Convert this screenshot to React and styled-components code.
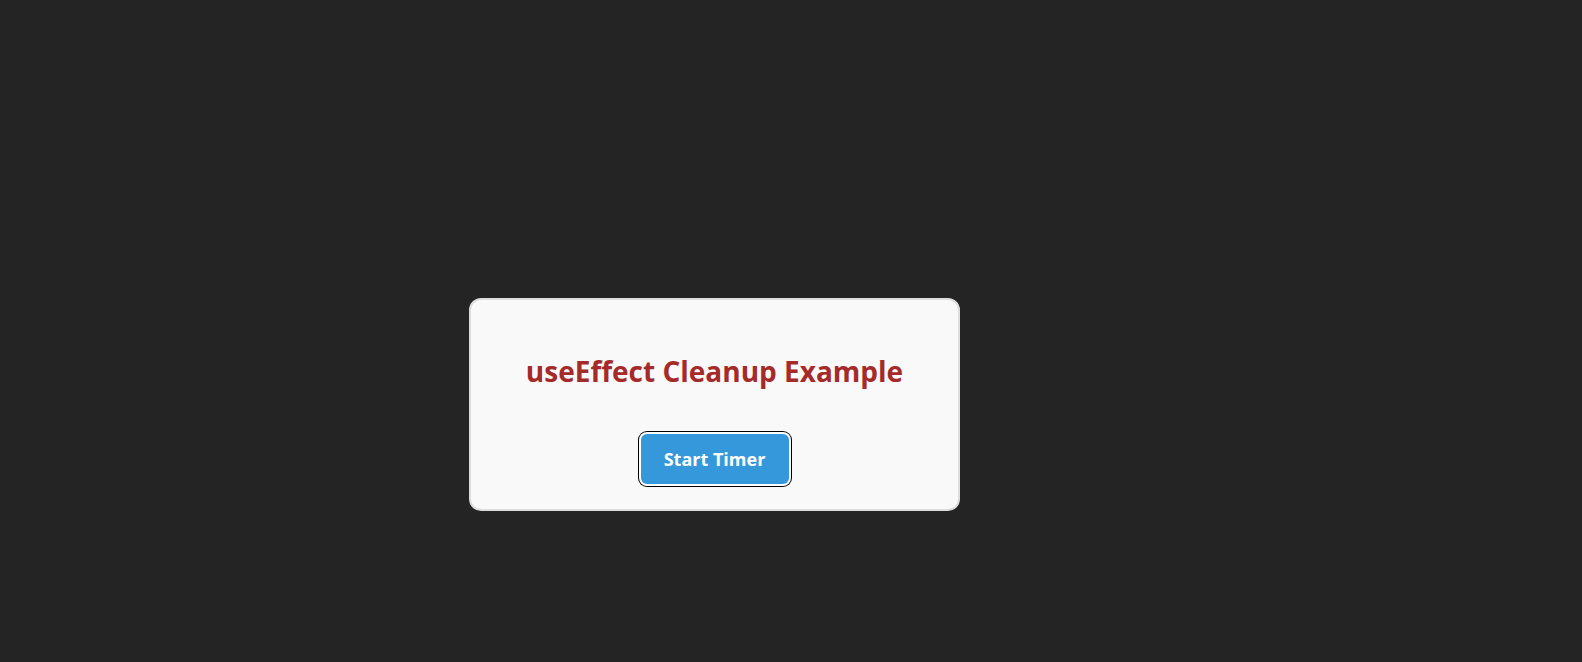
import React, { useEffect, useState } from "react";
import styled, { createGlobalStyle } from "styled-components";

const GlobalStyle = createGlobalStyle`
  html, body {
    margin: 0;
    padding: 0;
    background: #242424;
    font-family: "Open Sans", "Noto Sans", sans-serif;
  }
`;

let Page = styled.main`
  min-height: 100vh;
  box-sizing: border-box;
  padding: 298px 0 0 469px;
`;

let Card = styled.section`
  width: 491px;
  height: 213px;
  box-sizing: border-box;
  background: #f9f9f9;
  border: 2px solid #dddddd;
  border-radius: 12px;
  display: flex;
  flex-direction: column;
  align-items: center;
  padding-top: 55px;
  gap: 45px;
`;

let Title = styled.h2`
  margin: 0;
  font-size: 28px;
  line-height: 1.2;
  font-weight: 700;
  color: #a52a2a;
`;

let TimerButton = styled.button`
  font-family: inherit;
  font-size: 18px;
  font-weight: 700;
  color: #ffffff;
  background: #3498db;
  border: none;
  border-radius: 6px;
  width: 148px;
  height: 50px;
  padding-top: 2px;
  cursor: pointer;
  box-shadow: 0 0 0 2px #ffffff, 0 0 0 3px #000000;
  outline: none;
`;

let Seconds = styled.p`
  margin: 0;
  color: #333;
  font-size: 16px;
`;

const App = () => {
  const [running, setRunning] = useState(false);
  const [seconds, setSeconds] = useState(0);

  useEffect(() => {
    if (!running) return;
    const id = setInterval(() => setSeconds((s) => s + 1), 1000);
    return () => clearInterval(id);
  }, [running]);

  return (
    <Page>
      <GlobalStyle />
      <Card>
        <Title>useEffect Cleanup Example</Title>
        <TimerButton onClick={() => setRunning(!running)}>
          {running ? "Stop Timer" : "Start Timer"}
        </TimerButton>
        {running && <Seconds>Seconds: {seconds}</Seconds>}
      </Card>
    </Page>
  );
};

export default App;
